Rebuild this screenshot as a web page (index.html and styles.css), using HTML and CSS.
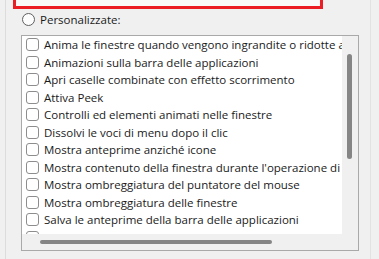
FILE: index.html
```html
<!DOCTYPE html>
<html lang="it">
<head>
<meta charset="UTF-8">
<title>Opzioni prestazioni</title>
<link rel="stylesheet" href="styles.css">
</head>
<body>
<div class="panel">
  <div class="highlight">
    <div class="cut-line">Regola per ottenere l'aspetto migliore</div>
  </div>

  <label class="option">
    <span class="radio"></span>
    <span>Personalizzate:</span>
  </label>

  <div class="listbox">
    <div class="items">
      <div class="item"><span class="check"></span>Anima le finestre quando vengono ingrandite o ridotte a icona</div>
      <div class="item"><span class="check"></span>Animazioni sulla barra delle applicazioni</div>
      <div class="item"><span class="check"></span>Apri caselle combinate con effetto scorrimento</div>
      <div class="item"><span class="check"></span>Attiva Peek</div>
      <div class="item"><span class="check"></span>Controlli ed elementi animati nelle finestre</div>
      <div class="item"><span class="check"></span>Dissolvi le voci di menu dopo il clic</div>
      <div class="item"><span class="check"></span>Mostra anteprime anziché icone</div>
      <div class="item"><span class="check"></span>Mostra contenuto della finestra durante l'operazione di trascinamento</div>
      <div class="item"><span class="check"></span>Mostra ombreggiatura del puntatore del mouse</div>
      <div class="item"><span class="check"></span>Mostra ombreggiatura delle finestre</div>
      <div class="item"><span class="check"></span>Salva le anteprime della barra delle applicazioni</div>
      <div class="item"><span class="check"></span></div>
    </div>
    <div class="vscroll"><div class="vthumb"></div></div>
    <div class="hscroll"><div class="hthumb"></div></div>
    <div class="corner"></div>
  </div>
</div>
</body>
</html>
```

FILE: styles.css
```css
body {
  margin: 0;
  background: #f0f0f0;
  font-family: "Open Sans", "Noto Sans", sans-serif;
  font-size: 11.5px;
  color: #1a1a1a;
  overflow: hidden;
}

.panel {
  margin-left: 5px;
  width: 364px;
  height: 259px;
  border-left: 1px solid #dcdcdc;
  border-right: 1px solid #e2e2e2;
}

.highlight {
  margin-left: 7px;
  width: 304px;
  height: 6px;
  border: 3px solid #ec1c24;
  border-top: none;
  background: #f9f9f9;
  overflow: hidden;
}

.cut-line {
  margin-top: -15px;
  padding-left: 25px;
  line-height: 16px;
  white-space: nowrap;
}

.option {
  display: flex;
  align-items: center;
  gap: 5px;
  margin: 3px 0 0 16px;
  height: 15px;
}

.radio {
  width: 11px;
  height: 11px;
  border: 1px solid #5f5f5f;
  border-radius: 50%;
  background: #fdfdfd;
}

.listbox {
  display: grid;
  grid-template-columns: 320px 16px;
  grid-template-rows: 198px 16px;
  margin: 8px 0 0 15px;
  width: 336px;
  border: 1px solid #a9a9a9;
  box-shadow: inset -1px -1px 0 #dcdcdc;
}

.items {
  background: #fff;
  overflow: hidden;
  white-space: nowrap;
}

.item {
  display: flex;
  align-items: center;
  gap: 5px;
  height: 17.5px;
  padding-left: 4px;
}

.check {
  flex: none;
  width: 11px;
  height: 11px;
  border: 1px solid #8d8d8d;
  border-radius: 3px;
  background: #fff;
}

.vscroll,
.hscroll,
.corner {
  background: #f0f0f0;
}

.vthumb {
  margin: 18px 0 0 5px;
  width: 5px;
  height: 105px;
  border-radius: 3px;
  background: #858585;
}

.hthumb {
  margin: 6px 0 0 18px;
  width: 232px;
  height: 4px;
  border-radius: 2px;
  background: #858585;
}
```
